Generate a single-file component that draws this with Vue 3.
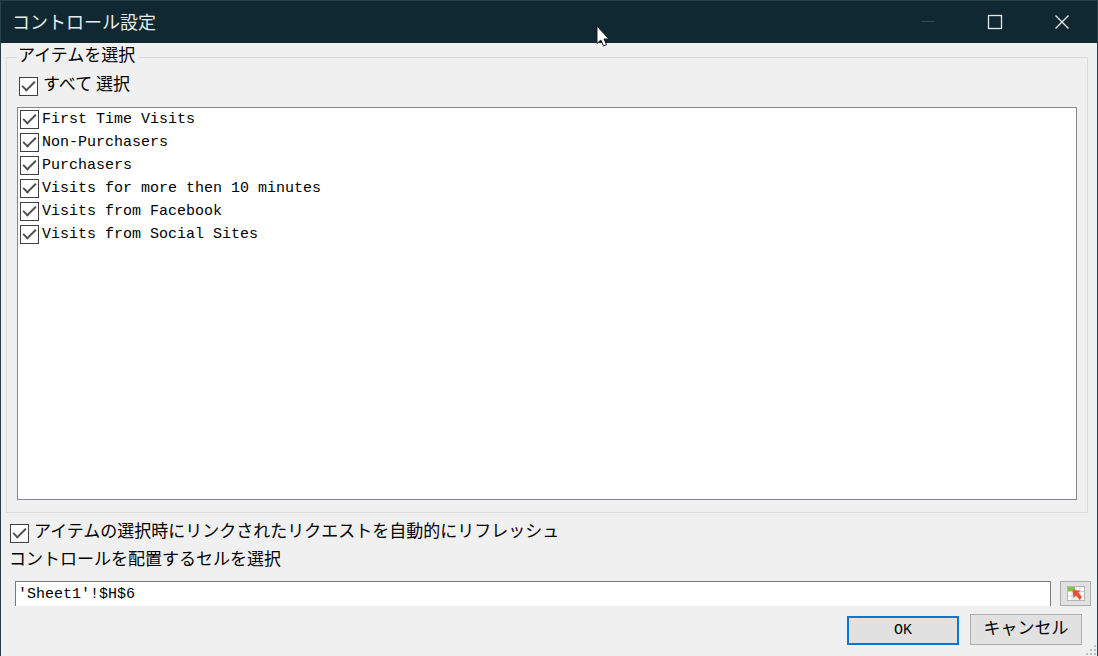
<script setup>
import { ref, computed } from 'vue'

const items = ref([
  { name: 'First Time Visits', checked: true },
  { name: 'Non-Purchasers', checked: true },
  { name: 'Purchasers', checked: true },
  { name: 'Visits for more then 10 minutes', checked: true },
  { name: 'Visits from Facebook', checked: true },
  { name: 'Visits from Social Sites', checked: true },
])
const all = computed({
  get: () => items.value.every((i) => i.checked),
  set: (v) => items.value.forEach((i) => { i.checked = v }),
})
const autoRefresh = ref(true)
const cell = ref("'Sheet1'!$H$6")
</script>

<template>
  <div class="dialog">
    <header class="titlebar">
      <h1>コントロール設定</h1>
      <div class="window-buttons">
        <button type="button" aria-label="最小化" disabled>
          <svg width="16" height="16" viewBox="0 0 16 16"><path d="M1 7.500H15" stroke="#32474f" /></svg>
        </button>
        <button type="button" aria-label="最大化">
          <svg width="16" height="16" viewBox="0 0 16 16"><rect x="1.500" y="1.500" width="13" height="13" fill="none" stroke="#e4e8e9" stroke-width="1.300" /></svg>
        </button>
        <button type="button" aria-label="閉じる">
          <svg width="16" height="16" viewBox="0 0 16 16"><path d="M1.500 1.500L14.500 14.500M14.500 1.500L1.500 14.500" stroke="#e4e8e9" stroke-width="1.400" /></svg>
        </button>
      </div>
    </header>

    <form class="content" @submit.prevent>
      <fieldset class="group">
        <legend>アイテムを選択</legend>
        <label class="check all">
          <input v-model="all" type="checkbox" />
          <span>すべて 選択</span>
        </label>
        <ul class="list">
          <li v-for="item in items" :key="item.name">
            <label class="check row">
              <input v-model="item.checked" type="checkbox" />
              <span>{{ item.name }}</span>
            </label>
          </li>
        </ul>
      </fieldset>

      <label class="check auto">
        <input v-model="autoRefresh" type="checkbox" />
        <span>アイテムの選択時にリンクされたリクエストを自動的にリフレッシュ</span>
      </label>
      <label class="cell-label" for="cell">コントロールを配置するセルを選択</label>
      <div class="cell-row">
        <input id="cell" v-model="cell" class="cell" type="text" />
        <button type="button" class="pick" aria-label="セルを選択">
          <svg width="18" height="16" viewBox="0 0 18 16">
            <rect x="0.500" y="0.500" width="17" height="14" fill="#fff" stroke="#b4b4b8" />
            <path d="M1 5.500H17M1 10H17M5 1V14M9 1V14M13 1V14" stroke="#d2d2d8" />
            <path d="M1 1H8V5H1Z" fill="#86c440" />
            <path d="M5.500 4L13.500 4.500L11.500 6.500L15 11.500L12.500 14L9 9.500L6.500 12Z" fill="#e4513b" />
          </svg>
        </button>
      </div>
      <div class="actions">
        <button type="submit" class="btn ok">OK</button>
        <button type="button" class="btn cancel">キャンセル</button>
      </div>
    </form>

    <svg class="grip" width="12" height="12" viewBox="0 0 12 12" aria-hidden="true">
      <path d="M9 1h2v2H9zM9 5h2v2H9zM5 5h2v2H5zM9 9h2v2H9zM5 9h2v2H5zM1 9h2v2H1z" fill="#bdbdbd" />
    </svg>
    <svg class="pointer" width="14" height="22" viewBox="0 0 14 22" aria-hidden="true">
      <path d="M1 1V18.500L4.800 15L7.500 21L10.500 19.700L8 14H12.800Z" fill="#fff" stroke="#1a1c2c" stroke-width="1" stroke-linejoin="round" />
    </svg>
  </div>
</template>

<style>
body {
  margin: 0;
}
</style>

<style scoped>
.dialog {
  position: relative;
  box-sizing: border-box;
  display: flex;
  flex-direction: column;
  min-height: 100vh;
  border: 1px solid #25404b;
  border-bottom: 0;
  background: #f0f0f0;
  color: #000;
  font-family: "Noto Sans CJK JP", sans-serif;
  font-size: 17px;
}
.titlebar {
  display: flex;
  align-items: center;
  justify-content: space-between;
  height: 42px;
  padding: 0 2px 0 11px;
  background: #0f2831;
}
h1 {
  margin: 0;
  padding-bottom: 2px;
  color: #e8ecee;
  font: 400 18px/26px "Noto Sans CJK JP", sans-serif;
}
.window-buttons {
  display: flex;
}
.window-buttons button {
  display: grid;
  place-items: center;
  width: 67px;
  height: 42px;
  padding: 0;
  border: 0;
  background: none;
}
.content {
  flex: 1;
  display: flex;
  flex-direction: column;
  padding: 2px 6px 10px 5px;
}
.group {
  min-width: 0;
  margin: 0 3px 0 0;
  padding: 0 10px 12px;
  border: 1px solid #dcdcdc;
}
legend {
  padding: 0 4px 6px 1px;
  line-height: 18px;
}
.check {
  display: flex;
  align-items: center;
}
.check span {
  padding-bottom: 6px;
  line-height: 20px;
}
input[type="checkbox"] {
  appearance: none;
  flex: none;
  display: grid;
  place-items: center;
  box-sizing: border-box;
  width: 19px;
  height: 19px;
  margin: 0;
  border: 1px solid #404040;
  background: #fff;
}
input[type="checkbox"]:checked::before {
  content: "";
  box-sizing: border-box;
  width: 13px;
  height: 7px;
  margin-bottom: 4px;
  border: solid #505050;
  border-width: 0 0 2px 2px;
  transform: rotate(-45deg);
}
.all {
  gap: 5px;
  margin: 4px 0 8px 2px;
}
.list {
  box-sizing: border-box;
  min-height: calc(100vh - 263px);
  margin: 0;
  padding: 0 2px;
  border: 1px solid #828790;
  background: #fff;
  list-style: none;
}
.row {
  gap: 3px;
  height: 23px;
}
.row span {
  padding-bottom: 0;
  font-family: "Liberation Mono", monospace;
  font-size: 15px;
  line-height: 20px;
}
.auto {
  gap: 5px;
  margin: 7px 0 0 4px;
}
.cell-label {
  margin: 0 0 0 3px;
  line-height: 24px;
}
.cell-row {
  display: flex;
  gap: 9px;
  margin: 11px 0 0 9px;
}
.cell {
  flex: 1;
  min-width: 0;
  box-sizing: border-box;
  height: 25px;
  padding: 0 2px;
  border: 1px solid #7a7a7a;
  border-bottom: 0;
  border-radius: 0;
  outline: 0;
  background: #fff;
  color: #000;
  font: 15px "Liberation Mono", monospace;
}
.pick {
  display: grid;
  place-items: center;
  width: 31px;
  height: 25px;
  padding: 0;
  border: 1px solid #adadad;
  background: #e1e1e1;
}
.actions {
  display: flex;
  align-items: flex-end;
  justify-content: flex-end;
  gap: 11px;
  margin: 8px 9px 0 0;
}
.btn {
  box-sizing: border-box;
  width: 112px;
  padding: 0;
  background: #e1e1e1;
  color: #000;
}
.ok {
  height: 29px;
  border: 2px solid #0078d7;
  font: 15px "Liberation Mono", monospace;
}
.cancel {
  height: 31px;
  padding-bottom: 6px;
  border: 1px solid #adadad;
  font: 17px/20px "Noto Sans CJK JP", sans-serif;
}
.grip {
  position: absolute;
  right: 0;
  bottom: 0;
}
.pointer {
  position: absolute;
  left: 595px;
  top: 24px;
}
</style>
